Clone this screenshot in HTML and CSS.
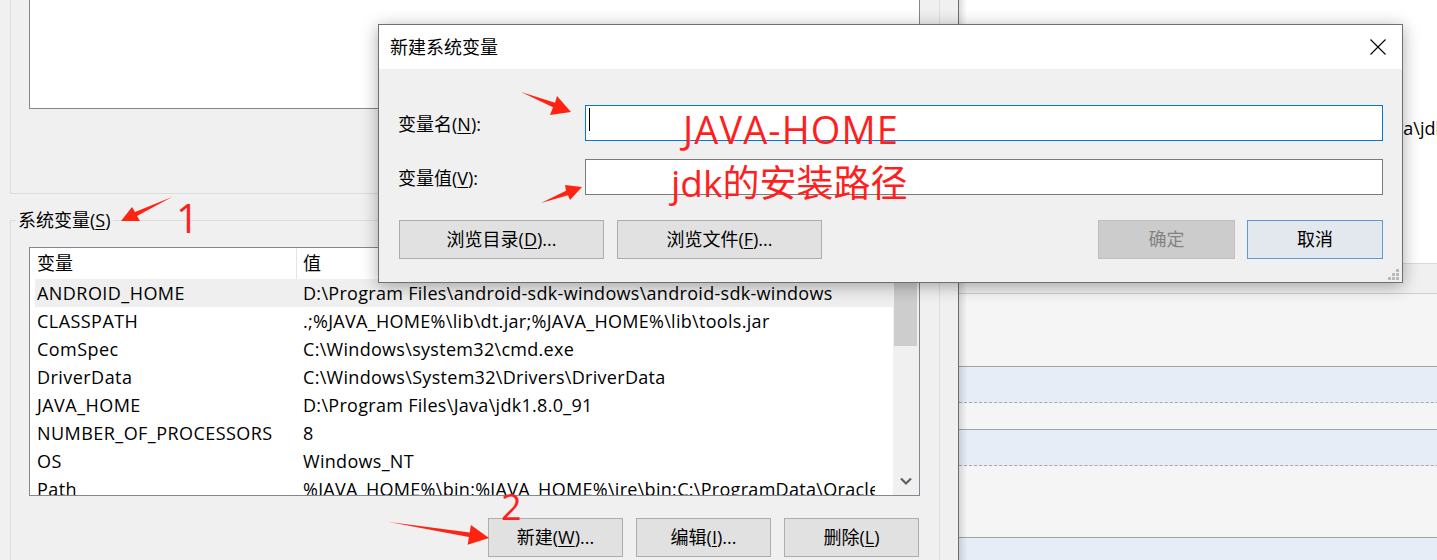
FILE: index.html
```html
<!DOCTYPE html>
<html lang="zh-CN">
<head>
<meta charset="utf-8">
<title>新建系统变量</title>
<link rel="stylesheet" href="styles.css">
</head>
<body>
<div class="desktop">
  <div class="envwin">
    <div class="group user-group">
      <div class="listbox top-list"></div>
    </div>
    <div class="group sys-group">
      <span class="legend">系统变量(<u>S</u>)</span>
      <div class="listbox sys-list">
        <div class="list-main">
          <div class="list-header">
            <div class="hcell c1">变量</div>
            <div class="hcell c2">值</div>
          </div>
          <div class="rows">
            <div class="row hover"><span class="name">ANDROID_HOME</span><span class="val">D:\Program Files\android-sdk-windows\android-sdk-windows</span></div>
            <div class="row"><span class="name">CLASSPATH</span><span class="val">.;%JAVA_HOME%\lib\dt.jar;%JAVA_HOME%\lib\tools.jar</span></div>
            <div class="row"><span class="name">ComSpec</span><span class="val">C:\Windows\system32\cmd.exe</span></div>
            <div class="row"><span class="name">DriverData</span><span class="val">C:\Windows\System32\Drivers\DriverData</span></div>
            <div class="row"><span class="name">JAVA_HOME</span><span class="val">D:\Program Files\Java\jdk1.8.0_91</span></div>
            <div class="row"><span class="name">NUMBER_OF_PROCESSORS</span><span class="val">8</span></div>
            <div class="row"><span class="name">OS</span><span class="val">Windows_NT</span></div>
            <div class="row"><span class="name">Path</span><span class="val">%JAVA_HOME%\bin;%JAVA_HOME%\jre\bin;C:\ProgramData\Oracle\Java\javapath</span></div>
          </div>
        </div>
        <div class="vscroll">
          <div class="sb-up"></div>
          <div class="sb-thumb"></div>
          <div class="sb-track"></div>
          <div class="sb-down">
            <svg width="12" height="9" viewBox="0 0 12 9"><polyline points="1,1.5 6,6.5 11,1.5" fill="none" stroke="#606060" stroke-width="2.2"/></svg>
          </div>
        </div>
      </div>
      <div class="btn-row">
        <button class="btn">新建(<u>W</u>)...</button>
        <button class="btn">编辑(<u>I</u>)...</button>
        <button class="btn">删除(<u>L</u>)</button>
      </div>
    </div>
  </div>

  <div class="bgwin">
    <div class="bg-top"><span class="bg-text">ra\jdk1.8.0_91</span></div>
    <div class="band gray"></div>
    <div class="band light h72 solid"></div>
    <div class="band blue h35 dashed"></div>
    <div class="band light h26 solid"></div>
    <div class="band blue h35 dashed"></div>
    <div class="band light h71 solid"></div>
    <div class="band blue last"></div>
  </div>

  <div class="dialog">
    <div class="titlebar">
      <span class="title">新建系统变量</span>
      <svg class="close" width="16" height="16" viewBox="0 0 16 16"><path d="M0.5 0.5 L15.5 15.5 M15.5 0.5 L0.5 15.5" stroke="#000" stroke-width="1.1" fill="none"/></svg>
    </div>
    <div class="dlg-body">
      <div class="field-row">
        <label class="field-label">变量名(<u>N</u>):</label>
        <div class="field-input focus"><span class="caret"></span></div>
      </div>
      <div class="field-row second">
        <label class="field-label">变量值(<u>V</u>):</label>
        <div class="field-input"></div>
      </div>
      <div class="dlg-buttons">
        <button class="dbtn wide">浏览目录(<u>D</u>)...</button>
        <button class="dbtn wide">浏览文件(<u>F</u>)...</button>
        <span class="spacer"></span>
        <button class="dbtn ok" disabled>确定</button>
        <button class="dbtn cancel">取消</button>
      </div>
    </div>
    <svg class="grip" width="11" height="11" viewBox="0 0 11 11">
      <rect x="8" y="0" width="3" height="3" fill="#b9b9b9"/>
      <rect x="4" y="4" width="3" height="3" fill="#b9b9b9"/>
      <rect x="8" y="4" width="3" height="3" fill="#b9b9b9"/>
      <rect x="0" y="8" width="3" height="3" fill="#b9b9b9"/>
      <rect x="4" y="8" width="3" height="3" fill="#b9b9b9"/>
      <rect x="8" y="8" width="3" height="3" fill="#b9b9b9"/>
    </svg>
  </div>

  <svg class="arrows" width="1437" height="560" viewBox="0 0 1437 560">
    <polygon points="521,92 555,102.7 557,96 571,112 550,115 553,107.3" fill="#ff2412"/>
    <polygon points="541,203 566,190.7 565,185 582,187 570,200 568,195.3" fill="#ff2412"/>
    <polygon points="172,197 135,211.9 132,207 121,221 140,221 137,216" fill="#ff2412"/>
    <polygon points="389,522 469.7,532.5 470.9,524.9 489,538 467.7,544.7 468.9,537.1" fill="#ff2412"/>
  </svg>
  <div class="anno anno-name">JAVA-HOME</div>
  <div class="anno anno-val">jdk的安装路径</div>
  <div class="anno anno-1">1</div>
  <div class="anno anno-2">2</div>
</div>
</body>
</html>
```

FILE: styles.css
```css
* { box-sizing: border-box; }

html, body {
  margin: 0;
  padding: 0;
  width: 1437px;
  height: 560px;
  overflow: hidden;
  background: #f0f0f0;
}

body {
  font-family: "Open Sans", "Noto Sans CJK SC", sans-serif;
  font-size: 18px;
  color: #000;
}

u { text-decoration: underline; text-underline-offset: 2px; text-decoration-thickness: 1px; }

.desktop {
  position: relative;
  display: flex;
  width: 1437px;
  height: 560px;
  overflow: hidden;
}

/* ---------- environment variables window ---------- */
.envwin {
  flex: none;
  width: 958px;
  height: 560px;
  background: #f0f0f0;
  display: flex;
  flex-direction: column;
}

.group {
  margin-left: 10px;
  width: 930px;
  border: 1px solid #dcdcdc;
}

.user-group {
  flex: none;
  height: 194px;
  border-top: none;
}

.listbox {
  background: #fff;
  border: 1px solid #828790;
}

.top-list {
  margin-left: 18px;
  width: 891px;
  height: 109px;
  border-top: none;
}

.sys-group {
  position: relative;
  flex: 1;
  margin-top: 26px;
  border-bottom: none;
}

.legend {
  position: absolute;
  top: -13px;
  left: 5px;
  padding: 0 2px;
  background: #f0f0f0;
  line-height: 24px;
  white-space: nowrap;
}

.sys-list {
  margin-top: 26px;
  margin-left: 18px;
  width: 891px;
  height: 249px;
  display: flex;
  overflow: hidden;
}

.list-main {
  flex: 1;
  min-width: 0;
  display: flex;
  flex-direction: column;
  overflow: hidden;
}

.list-header {
  flex: none;
  display: flex;
  height: 31px;
  line-height: 31px;
}

.hcell.c1 {
  width: 267px;
  padding-left: 7px;
  border-right: 1px solid #e5e5e5;
}

.hcell.c2 {
  padding-left: 6px;
}

.rows {
  padding-left: 5px;
}

.row {
  display: flex;
  height: 28px;
  line-height: 28px;
  white-space: nowrap;
  letter-spacing: 0.3px;
}

.row.hover { background: #efefef; }

.row .name {
  flex: none;
  width: 268px;
  padding-left: 2px;
  letter-spacing: 0.45px;
}

.row .val {
  flex: none;
  max-width: 572px;
  overflow: hidden;
}

.vscroll {
  flex: none;
  width: 26px;
  background: #f0f0f0;
  display: flex;
  flex-direction: column;
}

.sb-up { height: 34px; flex: none; }

.sb-thumb {
  flex: none;
  height: 64px;
  margin: 0 2px 0 1px;
  background: #cdcdcd;
}

.sb-track { flex: 1; }

.sb-down {
  flex: none;
  height: 27px;
  display: flex;
  align-items: center;
  justify-content: center;
  padding-right: 1px;
}

.btn-row {
  display: flex;
  justify-content: flex-end;
  gap: 13px;
  margin-top: 22px;
  padding-right: 20px;
}

.btn, .dbtn {
  font-family: "Open Sans", "Noto Sans CJK SC", sans-serif;
  font-size: 18px;
  color: #000;
  background: #e1e1e1;
  border: 1px solid #adadad;
  padding: 0;
  margin: 0;
  height: 39px;
  line-height: 37px;
  white-space: nowrap;
}

.btn { width: 135px; }

/* ---------- background window on the right ---------- */
.bgwin {
  position: relative;
  flex: 1;
  display: flex;
  flex-direction: column;
  border-left: 1px solid #6b6b6b;
  background: #fff;
}

.bgwin::before {
  content: "";
  position: absolute;
  left: 0;
  top: 0;
  bottom: 0;
  width: 8px;
  background: linear-gradient(to right, rgba(0,0,0,0.13), rgba(0,0,0,0));
}

.bg-top {
  flex: none;
  height: 264px;
  background: #fff;
  border-bottom: 1px solid #dadada;
  padding-top: 114px;
  padding-left: 437px;
  white-space: nowrap;
  line-height: 28px;
}

.band { flex: none; background: #f5f5f5; }
.band.gray { height: 30px; background: #f0f0f0; border-bottom: 1px solid #cfcfcf; }
.band.light { background: #f5f5f5; }
.band.blue { background: #e6edf7; }
.band.h72 { height: 73px; }
.band.h35 { height: 36px; }
.band.h26 { height: 27px; }
.band.h71 { height: 72px; }
.band.solid { border-bottom: 1px solid #a3a3a3; }
.band.dashed { border-bottom: 1px dashed #a8a8a8; }
.band.last { flex: 1; }

/* ---------- dialog ---------- */
.dialog {
  position: absolute;
  left: 378px;
  top: 24px;
  width: 1025px;
  height: 259px;
  border: 1px solid #707070;
  background: #f0f0f0;
  box-shadow: 0 3px 16px rgba(0,0,0,0.33);
  display: flex;
  flex-direction: column;
}

.titlebar {
  flex: none;
  height: 44px;
  background: #fff;
  display: flex;
  align-items: center;
  justify-content: space-between;
  padding-left: 11px;
  padding-right: 16px;
}

.title { line-height: 24px; }

.close { display: block; }

.dlg-body {
  flex: 1;
  padding: 36px 19px 0 19px;
}

.field-row {
  display: flex;
  align-items: center;
  height: 36px;
  margin-bottom: 18px;
}

.field-row.second { margin-bottom: 25px; }

.field-label {
  flex: none;
  width: 187px;
  white-space: nowrap;
}

.field-input {
  flex: 1;
  height: 36px;
  background: #fff;
  border: 1px solid #7a7a7a;
}

.field-input.focus { border-color: #0078d7; }

.caret {
  display: block;
  width: 1px;
  height: 23px;
  margin: 2px 0 0 3px;
  background: #000;
}

.dlg-buttons {
  display: flex;
  gap: 13px;
  padding-left: 1px;
}

.dbtn.wide { width: 205px; }
.spacer { flex: 1; }
.dbtn.ok {
  width: 137px;
  margin-right: -1px;
  background: #cccccc;
  border-color: #bfbfbf;
  color: #838383;
}
.dbtn.cancel {
  width: 136px;
  background: #e3e8ee;
  border-color: #5d9ad2;
}

.grip {
  position: absolute;
  right: 3px;
  bottom: 2px;
}

/* ---------- annotations ---------- */
.arrows {
  position: absolute;
  left: 0;
  top: 0;
  pointer-events: none;
}

.anno {
  position: absolute;
  color: #ff1f1f;
  white-space: nowrap;
  pointer-events: none;
}

.anno-name { left: 683px; top: 110px; font-size: 38px; line-height: 38px; letter-spacing: 1.1px; }
.anno-val { left: 671px; top: 164px; font-size: 37px; line-height: 37px; }
.anno-1 { left: 176px; top: 198px; font-size: 40px; line-height: 40px; }
.anno-2 { left: 501px; top: 489px; font-size: 36px; line-height: 36px; }
```
